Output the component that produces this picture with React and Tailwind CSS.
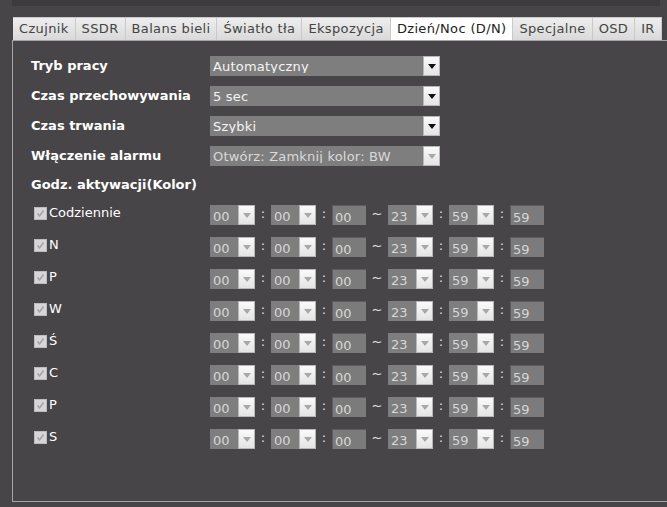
import React from 'react';

const tabs = ['Czujnik', 'SSDR', 'Balans bieli', 'Światło tła', 'Ekspozycja', 'Dzień/Noc (D/N)', 'Specjalne', 'OSD', 'IR'];
const days = ['Codziennie', 'N', 'P', 'W', 'Ś', 'C', 'P', 'S'];

const font = { fontFamily: '"DejaVu Sans", Verdana, sans-serif' };

const Arrow = ({ disabled }) => (
    <div className="w-[17px] h-full border border-[#b8b8b8] bg-gradient-to-b from-[#fafafa] to-[#e4e4e4] flex items-center justify-center shrink-0">
        <svg width="8" height="5" viewBox="0 0 8 5">
            <path d="M0 0 L8 0 L4 5 Z" fill={disabled ? '#a8a8a8' : '#111'} />
        </svg>
    </div>
);

const Select = ({ value, disabled }) => (
    <div className="w-[230px] h-[20px] bg-[#7f7e7f] flex items-center">
        <span className={`flex-1 pl-[3px] text-[13px] leading-none truncate tracking-[0.2px] ${disabled ? 'text-[#d9d9d9]' : 'text-[#f4f4f4]'}`}>{value}</span>
        <Arrow disabled={disabled} />
    </div>
);

const TimeSelect = ({ value }) => (
    <div className="w-[45px] h-[20px] bg-[#7f7e7f] flex items-center">
        <span className="flex-1 pl-[3px] pt-[2px] text-[13px] leading-none text-[#d6d6d6]">{value}</span>
        <Arrow disabled />
    </div>
);

const TimeInput = ({ value }) => (
    <div className="w-[34px] h-[20px] bg-[#7c7b7c] border-t border-l border-[#5e5c5e] flex items-end pl-[2px] pb-[1px]">
        <span className="text-[13px] leading-none text-[#d6d6d6]">{value}</span>
    </div>
);

const Sep = ({ ch, w }) => (
    <div className={`${w} text-center text-[13px] text-[#e6e6e6] leading-none -mt-[4px]`}>{ch}</div>
);

const Checkbox = () => (
    <div className="w-[13px] h-[13px] bg-[#d6d6d6] border border-[#bcbcbc] flex items-center justify-center">
        <svg width="9" height="9" viewBox="0 0 9 9">
            <path d="M1.5 4.5 L3.5 7 L7.5 1.5" stroke="#a4a4a4" strokeWidth="1.6" fill="none" />
        </svg>
    </div>
);

const App = () => {
    const fields = [
        ['Tryb pracy', 'Automatyczny', false],
        ['Czas przechowywania', '5 sec', false],
        ['Czas trwania', 'Szybki', false],
        ['Włączenie alarmu', 'Otwórz: Zamknij kolor: BW', true],
    ];

    return (
        <div className="w-[667px] h-[507px] bg-[#474547] overflow-hidden" style={font}>
            <div className="ml-[12px] w-[648px] h-[6px] bg-[#3c3a3c]"></div>

            {/* zakładki */}
            <div className="ml-[13px] mt-[11px] flex h-[23px]">
                {tabs.map((t, i) => (
                    <div
                        key={i}
                        className={`px-[6px] flex items-center text-[13px] tracking-[0.35px] border-t border-r border-[#c9c9c9] ${i === 5 ? 'bg-white text-[#222]' : 'bg-gradient-to-b from-[#eeeeee] to-[#d9d9d9] text-[#444]'}`}
                    >
                        {t}
                    </div>
                ))}
            </div>

            <div className="ml-[12px] w-[700px] h-[462px] border-l border-t border-b border-[#a4a4a4] pl-[18px] pt-[10px]">
                {fields.map(([label, value, dis]) => (
                    <div key={label} className="flex items-center h-[30px]">
                        <div className="w-[179px] text-[13px] font-bold text-white">{label}</div>
                        <Select value={value} disabled={dis} />
                    </div>
                ))}
                <div className="flex items-center h-[28px]">
                    <div className="text-[13px] font-bold text-white">Godz. aktywacji(Kolor)</div>
                </div>
                {days.map((d, i) => (
                    <div key={i} className="flex items-center h-[32px]">
                        <div className="w-[179px] flex items-center gap-[2px] pl-[3px] -mt-[4px]">
                            <Checkbox />
                            <span className="text-[13px] text-white">{d}</span>
                        </div>
                        <TimeSelect value="00" />
                        <Sep ch=":" w="w-[16px]" />
                        <TimeSelect value="00" />
                        <Sep ch=":" w="w-[16px]" />
                        <TimeInput value="00" />
                        <Sep ch="~" w="w-[22px]" />
                        <TimeSelect value="23" />
                        <Sep ch=":" w="w-[16px]" />
                        <TimeSelect value="59" />
                        <Sep ch=":" w="w-[16px]" />
                        <TimeInput value="59" />
                    </div>
                ))}
            </div>
        </div>
    );
};

export default App;
